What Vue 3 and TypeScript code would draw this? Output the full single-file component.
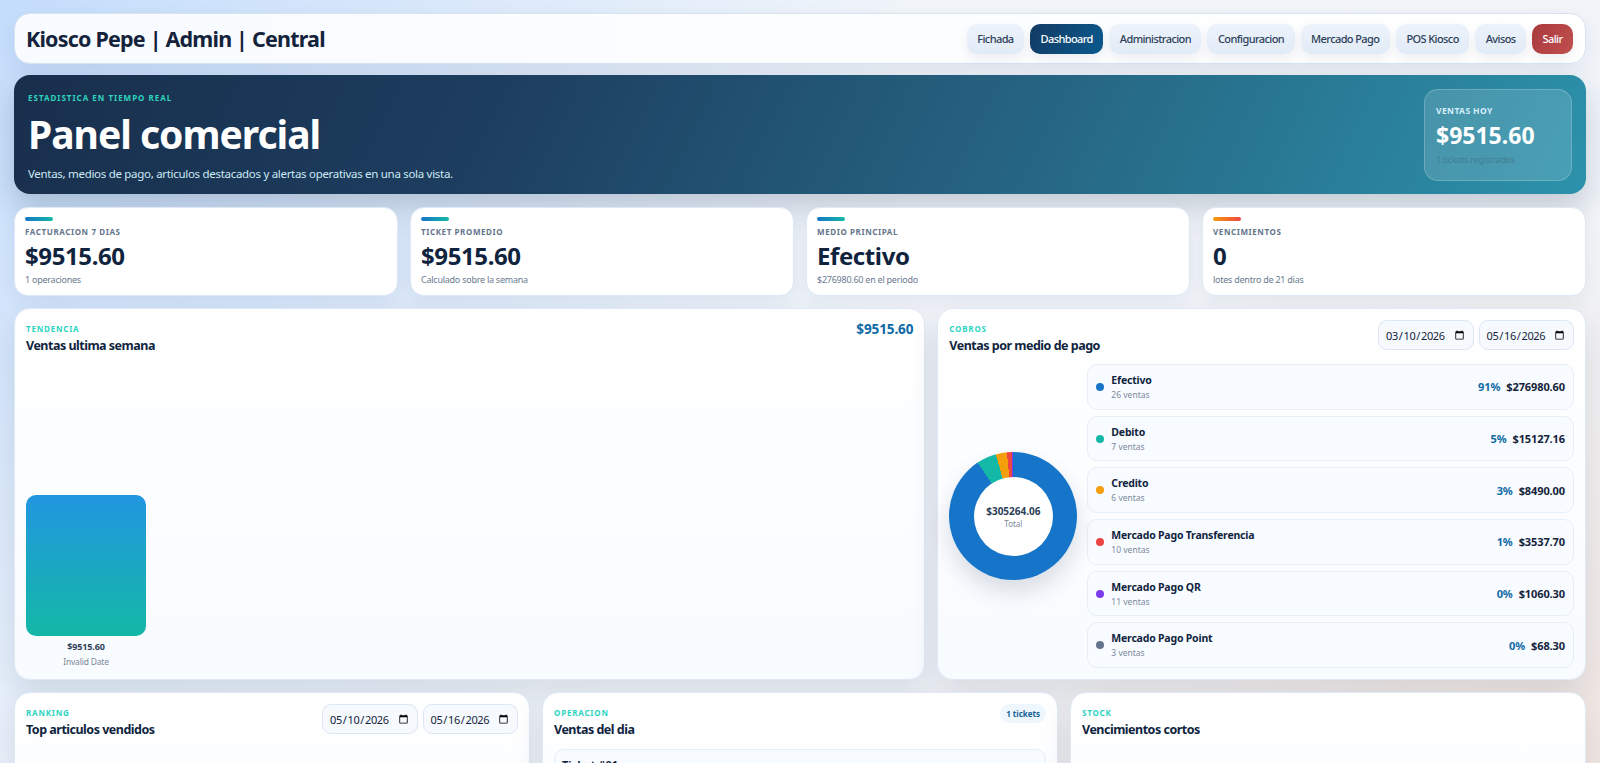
<script setup lang="ts">
import { computed } from 'vue'

interface Payment {
  name: string
  count: number
  total: number
  color: string
}

const navItems = ['Fichada', 'Dashboard', 'Administracion', 'Configuracion', 'Mercado Pago', 'POS Kiosco', 'Avisos', 'Salir']

const kpis = [
  { label: 'Facturacion 7 dias', value: '$9515.60', note: '1 operaciones', warn: false },
  { label: 'Ticket promedio', value: '$9515.60', note: 'Calculado sobre la semana', warn: false },
  { label: 'Medio principal', value: 'Efectivo', note: '$276980.60 en el periodo', warn: false },
  { label: 'Vencimientos', value: '0', note: 'lotes dentro de 21 dias', warn: true },
]

const payments: Payment[] = [
  { name: 'Efectivo', count: 26, total: 276980.6, color: '#1675c8' },
  { name: 'Debito', count: 7, total: 15127.16, color: '#14b8a6' },
  { name: 'Credito', count: 6, total: 8490, color: '#f59e0b' },
  { name: 'Mercado Pago Transferencia', count: 10, total: 3537.7, color: '#ef4444' },
  { name: 'Mercado Pago QR', count: 11, total: 1060.3, color: '#7c3aed' },
  { name: 'Mercado Pago Point', count: 3, total: 68.3, color: '#64748b' },
]

const grandTotal = computed(() => payments.reduce((sum, p) => sum + p.total, 0))

const donutStyle = computed(() => {
  let from = 0
  const stops = payments.map((p) => {
    const to = from + (p.total / grandTotal.value) * 360
    const stop = `${p.color} ${from}deg ${to}deg`
    from = to
    return stop
  })
  return { background: `conic-gradient(${stops.join(', ')})` }
})

const share = (p: Payment) => `${Math.round((p.total / grandTotal.value) * 100)}%`
</script>

<template>
  <div class="page">
    <header class="topbar">
      <h1 class="brand">Kiosco Pepe | Admin | Central</h1>
      <nav class="nav">
        <button
          v-for="item in navItems"
          :key="item"
          class="nav-btn"
          :class="{ active: item === 'Dashboard', danger: item === 'Salir' }"
        >
          {{ item }}
        </button>
      </nav>
    </header>

    <section class="hero">
      <div class="hero-copy">
        <p class="hero-kicker">Estadistica en tiempo real</p>
        <h2 class="hero-title">Panel comercial</h2>
        <p class="hero-sub">Ventas, medios de pago, articulos destacados y alertas operativas en una sola vista.</p>
      </div>
      <div class="hero-box">
        <span class="hero-box-label">Ventas hoy</span>
        <strong class="hero-box-value">$9515.60</strong>
        <span class="hero-box-note">1 tickets registrados</span>
      </div>
    </section>

    <section class="kpis">
      <article v-for="kpi in kpis" :key="kpi.label" class="kpi">
        <span class="kpi-accent" :class="{ warn: kpi.warn }"></span>
        <span class="kpi-label">{{ kpi.label }}</span>
        <strong class="kpi-value">{{ kpi.value }}</strong>
        <span class="kpi-note">{{ kpi.note }}</span>
      </article>
    </section>

    <section class="charts">
      <article class="panel trend">
        <div class="panel-head">
          <div>
            <p class="kicker">Tendencia</p>
            <h3 class="panel-title">Ventas ultima semana</h3>
          </div>
          <strong class="trend-total">$9515.60</strong>
        </div>
        <div class="bars">
          <div class="bar-col">
            <div class="bar"></div>
            <strong class="bar-value">$9515.60</strong>
            <span class="bar-date">Invalid Date</span>
          </div>
        </div>
      </article>

      <article class="panel">
        <div class="panel-head">
          <div>
            <p class="kicker">Cobros</p>
            <h3 class="panel-title">Ventas por medio de pago</h3>
          </div>
          <div class="dates">
            <input class="date" type="date" value="2026-03-10" />
            <input class="date" type="date" value="2026-05-16" />
          </div>
        </div>
        <div class="pay-body">
          <div class="donut-wrap">
            <div class="donut" :style="donutStyle"></div>
            <div class="donut-hole">
              <strong>$305264.06</strong>
              <span>Total</span>
            </div>
          </div>
          <ul class="pay-list">
            <li v-for="p in payments" :key="p.name" class="pay-item">
              <span class="dot" :style="{ background: p.color }"></span>
              <div class="pay-name">
                <strong>{{ p.name }}</strong>
                <span>{{ p.count }} ventas</span>
              </div>
              <b class="pay-share">{{ share(p) }}</b>
              <b class="pay-total">${{ p.total.toFixed(2) }}</b>
            </li>
          </ul>
        </div>
      </article>
    </section>

    <section class="bottom">
      <article class="panel">
        <div class="panel-head">
          <div>
            <p class="kicker">Ranking</p>
            <h3 class="panel-title">Top articulos vendidos</h3>
          </div>
          <div class="dates">
            <input class="date" type="date" value="2026-05-10" />
            <input class="date" type="date" value="2026-05-16" />
          </div>
        </div>
      </article>

      <article class="panel">
        <div class="panel-head">
          <div>
            <p class="kicker">Operacion</p>
            <h3 class="panel-title">Ventas del dia</h3>
          </div>
          <span class="pill">1 tickets</span>
        </div>
        <div class="ticket">
          <strong>Ticket #01</strong>
          <span class="ticket-total">$9515.60</span>
        </div>
      </article>

      <article class="panel">
        <div class="panel-head">
          <div>
            <p class="kicker">Stock</p>
            <h3 class="panel-title">Vencimientos cortos</h3>
          </div>
        </div>
      </article>
    </section>
  </div>
</template>

<style>
html,
body {
  height: 100%;
  overflow: hidden;
}
</style>

<style scoped>
.page {
  box-sizing: border-box;
  min-height: 100vh;
  padding: 13px 14px;
  display: flex;
  flex-direction: column;
  gap: 11px;
  font-family: "Noto Sans", "Open Sans", sans-serif;
  color: #10243e;
  background:
    radial-gradient(circle at 0 0, #c4ddfc 0, rgba(196, 221, 252, 0) 50%),
    radial-gradient(circle at 100% 100%, #f1e3dc 0, rgba(241, 227, 220, 0) 40%),
    #f1f5fa;
}

p,
h1,
h2,
h3,
ul {
  margin: 0;
  padding: 0;
}

.topbar {
  height: 51px;
  box-sizing: border-box;
  padding: 0 12px 0 11px;
  display: flex;
  align-items: center;
  justify-content: space-between;
  background: linear-gradient(90deg, #f8fbff, #ffffff);
  border: 1px solid #d8e3f0;
  border-radius: 16px;
  box-shadow: 0 8px 22px rgba(15, 35, 65, 0.07);
}

.brand {
  font-size: 21.5px;
  font-weight: 700;
  letter-spacing: -0.8px;
  color: #14233b;
}

.nav {
  display: flex;
  gap: 6px;
}

.nav-btn {
  height: 30px;
  padding: 0 10.5px;
  font: 500 11px "Noto Sans", sans-serif;
  letter-spacing: -0.6px;
  color: #2d4058;
  background: linear-gradient(180deg, #edf3fb, #e1ebf7);
  border: 0;
  border-radius: 10px;
  box-shadow: 0 5px 12px rgba(15, 35, 65, 0.07);
}

.nav-btn.active {
  color: #fff;
  background: linear-gradient(120deg, #123a63, #0b5a8e);
}

.nav-btn.danger {
  color: #fff;
  background: linear-gradient(120deg, #a93a3c, #c04f4f);
}

.hero {
  height: 119px;
  box-sizing: border-box;
  padding: 14px;
  display: flex;
  align-items: center;
  justify-content: space-between;
  color: #fff;
  background: linear-gradient(115deg, #182f4c 0%, #1d3d5f 30%, #266683 65%, #2c92ab 100%);
  border-radius: 16px;
  box-shadow: 0 14px 30px rgba(15, 35, 65, 0.2);
}

.hero-copy {
  padding-top: 3px;
}

.hero-kicker {
  font-size: 8px;
  font-weight: 700;
  letter-spacing: 1px;
  text-transform: uppercase;
  color: #2dd4bf;
}

.hero-title {
  margin: 7px 0 8px;
  font-size: 39px;
  line-height: 48px;
  font-weight: 700;
  letter-spacing: -1px;
}

.hero-sub {
  font-size: 11.5px;
  letter-spacing: -0.3px;
  color: #cdeaf5;
}

.hero-box {
  width: 148px;
  height: 92px;
  box-sizing: border-box;
  padding: 15px 11px;
  display: flex;
  flex-direction: column;
  background: rgba(255, 255, 255, 0.14);
  border: 1px solid rgba(255, 255, 255, 0.2);
  border-radius: 14px;
}

.hero-box-label {
  font-size: 8.5px;
  font-weight: 700;
  letter-spacing: 0.4px;
  text-transform: uppercase;
  color: #d4eefa;
}

.hero-box-value {
  margin-top: 2px;
  font-size: 23px;
  line-height: 35px;
}

.hero-box-note {
  font-size: 9px;
  letter-spacing: -0.3px;
  color: rgba(60, 80, 100, 0.4);
}

.kpis {
  display: grid;
  grid-template-columns: repeat(4, 1fr);
  gap: 12px;
  margin-top: 2px;
}

.kpi {
  height: 89px;
  box-sizing: border-box;
  padding: 9px 10px;
  display: flex;
  flex-direction: column;
  background: #fff;
  border: 1px solid #dfe9f5;
  border-radius: 14px;
  box-shadow: 0 8px 20px rgba(15, 35, 65, 0.06);
}

.kpi-accent {
  width: 28px;
  height: 4px;
  margin-bottom: 5px;
  border-radius: 4px;
  background: linear-gradient(90deg, #1675c8, #14b8a6);
}

.kpi-accent.warn {
  background: linear-gradient(90deg, #f59e0b, #ef4444);
}

.kpi-label {
  font-size: 8px;
  font-weight: 700;
  letter-spacing: 0.6px;
  text-transform: uppercase;
  color: #64748b;
}

.kpi-value {
  margin-top: 2px;
  font-size: 24px;
  line-height: 33px;
  letter-spacing: -0.4px;
  color: #10243e;
}

.kpi-note {
  margin-top: 1px;
  font-size: 9px;
  letter-spacing: -0.25px;
  color: #6b7a8f;
}

.charts {
  display: grid;
  grid-template-columns: 1.405fr 1fr;
  gap: 12px;
  margin-top: 1px;
}

.bottom {
  display: grid;
  grid-template-columns: repeat(3, 1fr);
  gap: 12px;
  margin-top: 1px;
}

.panel {
  box-sizing: border-box;
  padding: 11px;
  background: linear-gradient(180deg, #ffffff, #f8fbff);
  border: 1px solid #dfe9f5;
  border-radius: 16px;
  box-shadow: 0 14px 30px rgba(15, 35, 65, 0.11);
}

.charts .panel {
  height: 372px;
  display: flex;
  flex-direction: column;
}

.panel-head {
  display: flex;
  justify-content: space-between;
  align-items: flex-start;
}

.kicker {
  margin-top: 3px;
  font-size: 8px;
  font-weight: 700;
  letter-spacing: 0.8px;
  text-transform: uppercase;
  color: #2dd4bf;
}

.panel-title {
  margin-top: 2.5px;
  font-size: 12.5px;
  font-weight: 700;
  letter-spacing: -0.5px;
  color: #10243e;
}

.trend-total {
  font-size: 13.5px;
  letter-spacing: -0.1px;
  color: #0f6aa6;
}

.bars {
  flex: 1;
  display: flex;
  align-items: flex-end;
}

.bar-col {
  width: 120px;
  display: flex;
  flex-direction: column;
  align-items: center;
}

.bar {
  width: 100%;
  height: 141px;
  margin-bottom: 4px;
  border-radius: 10px;
  background: linear-gradient(180deg, #2196e0, #14b8a6);
}

.bar-value {
  font-size: 9px;
  line-height: 13px;
  letter-spacing: -0.15px;
  color: #2d4058;
}

.bar-date {
  margin-top: 3px;
  font-size: 8.5px;
  line-height: 12px;
  letter-spacing: -0.2px;
  color: #7b899b;
}

.dates {
  display: flex;
  gap: 5px;
}

.date {
  box-sizing: border-box;
  width: 95.5px;
  height: 30px;
  padding: 0 6px;
  font: 400 11px "Noto Sans", sans-serif;
  letter-spacing: -0.4px;
  color: #14233b;
  background: #f6faff;
  border: 1px solid #dbe7f4;
  border-radius: 9px;
}

.pay-body {
  flex: 1;
  margin-top: 10.5px;
  display: flex;
  align-items: center;
  gap: 10px;
}

.donut-wrap {
  position: relative;
  width: 128px;
  height: 128px;
  flex: none;
  border-radius: 50%;
  box-shadow: 0 12px 22px rgba(15, 35, 65, 0.14);
}

.donut {
  width: 100%;
  height: 100%;
  border-radius: 50%;
}

.donut-hole {
  position: absolute;
  inset: 24.5px;
  display: flex;
  flex-direction: column;
  align-items: center;
  justify-content: center;
  background: #fff;
  border-radius: 50%;
}

.donut-hole strong {
  font-size: 10px;
  color: #2d4058;
}

.donut-hole span {
  font-size: 8px;
  color: #7b899b;
}

.pay-list {
  flex: 1;
  align-self: stretch;
  display: flex;
  flex-direction: column;
  gap: 6px;
  list-style: none;
}

.pay-item {
  flex: 1;
  box-sizing: border-box;
  padding: 0 8px;
  display: flex;
  align-items: center;
  gap: 6px;
  background: #f8fbff;
  border: 1px solid #e6eff8;
  border-radius: 10px;
}

.dot {
  width: 8px;
  height: 8px;
  margin-right: 1px;
  border-radius: 50%;
}

.pay-name {
  flex: 1;
  display: flex;
  flex-direction: column;
}

.pay-name strong {
  font-size: 10.5px;
  line-height: 15px;
  letter-spacing: -0.2px;
  color: #10243e;
}

.pay-name span {
  font-size: 8.5px;
  line-height: 13px;
  color: #7b899b;
}

.pay-share {
  font-size: 11px;
  letter-spacing: -0.1px;
  color: #0f6aa6;
}

.pay-total {
  font-size: 11px;
  letter-spacing: -0.1px;
  color: #14233b;
}

.bottom .panel {
  height: 200px;
}

.pill {
  padding: 4px 6px;
  font-size: 8px;
  font-weight: 700;
  color: #0f5f96;
  background: #eef6fe;
  border-radius: 10px;
}

.ticket {
  height: 80px;
  box-sizing: border-box;
  margin-top: 11px;
  padding: 7px;
  display: flex;
  justify-content: space-between;
  align-items: flex-start;
  font-size: 11px;
  background: #f8fbff;
  border: 1px solid #e3edf7;
  border-radius: 10px;
}

.ticket-total {
  margin-top: 6px;
  margin-right: 48px;
  padding: 5px 3px;
  font-size: 9px;
  color: #0f5f96;
  background: #eef6fe;
  border-radius: 8px;
}
</style>
